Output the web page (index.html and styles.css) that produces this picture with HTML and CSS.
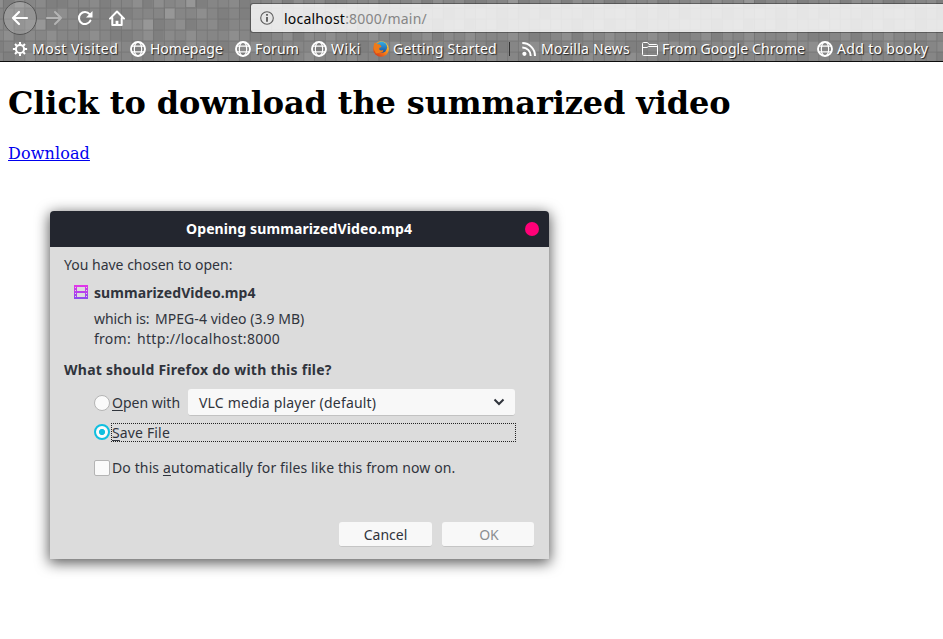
FILE: index.html
```html
<!DOCTYPE html>
<html lang="en">
<head>
<meta charset="utf-8">
<title>localhost:8000/main/</title>
<link rel="stylesheet" href="styles.css">
</head>
<body>
<svg class="defs" width="0" height="0">
  <defs>
    <linearGradient id="film" x1="0" y1="0" x2="0" y2="1"><stop offset="0" stop-color="#e535e8"/><stop offset="1" stop-color="#8a4af0"/></linearGradient>
    <linearGradient id="fox" x1=".9" y1=".1" x2=".2" y2=".9"><stop offset="0" stop-color="#ffd83a"/><stop offset=".45" stop-color="#f98a18"/><stop offset="1" stop-color="#d8401a"/></linearGradient>
    <linearGradient id="sky" x1="0" y1="0" x2="0" y2="1"><stop offset="0" stop-color="#35b0e6"/><stop offset="1" stop-color="#1a4f9c"/></linearGradient>
    <symbol id="globe" viewBox="0 0 16 16"><g fill="none" stroke="#fff"><circle cx="8" cy="8" r="7" stroke-width="1.9"/><ellipse cx="8" cy="8" rx="3.7" ry="7" stroke-width="1.2"/><path d="M1.8 5.2h12.4M1.8 10.8h12.4" stroke-width="1.2"/></g></symbol>
  </defs>
</svg>
<header class="chrome">
  <svg class="tiles" width="943" height="61" aria-hidden="true">
    <defs>
      <pattern id="cells" width="139.49" height="66" x="2.9" y="-3.4" patternUnits="userSpaceOnUse">
        <g transform="scale(10.73 11)">
          <rect width="13" height="6" fill="#868686"/>
          <path fill="#7f7f7f" d="M0 0h1v1h-1zM4 0h2v1h-2zM9 0h1v2h-1zM2 1h1v1h-1zM7 1h1v2h-1zM11 1h1v1h-1zM1 2h1v2h-1zM4 2h1v1h-1zM10 3h2v1h-2zM3 4h1v1h-1zM6 4h2v1h-2zM0 5h1v1h-1zM9 5h1v1h-1zM12 4h1v1h-1z"/>
          <path fill="#8e8e8e" d="M1 0h1v1h-1zM5 1h1v1h-1zM12 0h1v1h-1zM3 2h1v1h-1zM0 3h1v1h-1zM4 3h1v2h-1zM8 3h1v1h-1zM11 2h1v1h-1zM2 5h1v1h-1zM6 5h1v1h-1zM10 4h1v1h-1z"/>
          <path fill="#8a8a8a" d="M3 0h1v1h-1zM6 2h1v1h-1zM12 2h1v1h-1zM2 3h1v1h-1zM9 4h1v1h-1zM8 0h1v1h-1zM5 5h1v1h-1z"/>
        </g>
      </pattern>
      <pattern id="grid" width="10.73" height="11" x="2.9" y="-3.4" patternUnits="userSpaceOnUse"><path d="M.5 0v11M0 .5h10.73" stroke="#686868" stroke-opacity=".5"/></pattern>
    </defs>
    <rect width="943" height="61" fill="url(#cells)"/>
    <path fill="#979797" d="M186 0h9v7h-9zM143 19h10v11h-10zM165 8h10v11h-10zM35 19h10v11h-10zM508 0h10v3h-10zM744 0h10v3h-10z"/>
    <rect width="943" height="61" fill="url(#grid)"/>
  </svg>
  <div class="toolbar">
    <span class="back"><svg width="18" height="18" viewBox="0 0 18 18" fill="none" stroke="#fff" stroke-width="2.2" stroke-linecap="round" stroke-linejoin="round"><path d="M16 9H2M8 3L2 9l6 6"/></svg></span>
    <svg class="forward" width="18" height="18" viewBox="0 0 18 18" fill="none" stroke="#b4b4b4" stroke-width="2" stroke-linecap="round" stroke-linejoin="round"><path d="M2 9h14M10 3l6 6-6 6"/></svg>
    <svg class="reload" width="16" height="16" viewBox="0 0 16 16"><path d="M12.6 4.2A6 6 0 1 0 13.4 10.6" fill="none" stroke="#fff" stroke-width="2.1" stroke-linecap="round"/><path d="M15.5 1v6.5H9z" fill="#fff"/></svg>
    <svg class="home" width="16" height="16" viewBox="0 0 16 16" fill="none" stroke="#fff" stroke-width="2" stroke-linejoin="round" stroke-linecap="round"><path d="M1 8.6L8 1.5l7 7.1M3.3 8v7h9.4V8"/><path d="M8 15v-4.2" stroke-width="2.8" stroke-linecap="butt"/></svg>
    <div class="urlbar">
      <svg width="14" height="14" viewBox="0 0 14 14"><circle cx="7" cy="7" r="6.3" fill="none" stroke="#5c5c5c" stroke-width="1.1"/><path d="M7 3v1.8M7 6v4.7" stroke="#505050" stroke-width="1.7"/></svg>
      <span class="url"><b>localhost</b>:8000/main/</span>
    </div>
  </div>
  <nav class="bookmarks">
    <a class="mark visited"><svg width="16" height="16" viewBox="0 0 16 16" stroke="#fff" fill="none"><circle cx="8" cy="8" r="4.1" stroke-width="2"/><path d="M8 .9v2.5M8 12.6v2.5M.9 8h2.5M12.6 8h2.5M3 3l1.7 1.7M11.3 11.3L13 13M3 13l1.7-1.7M11.3 4.7L13 3" stroke-width="2"/></svg><span>Most Visited</span></a>
    <a class="mark homepage"><svg width="16" height="16"><use href="#globe"/></svg><span>Homepage</span></a>
    <a class="mark forum"><svg width="16" height="16"><use href="#globe"/></svg><span>Forum</span></a>
    <a class="mark wiki"><svg width="16" height="16"><use href="#globe"/></svg><span>Wiki</span></a>
    <a class="mark started"><svg width="16" height="16" viewBox="0 0 16 16"><circle cx="8" cy="8" r="7.800" fill="url(#fox)"/><circle cx="8.500" cy="6.200" r="5.600" fill="url(#sky)"/><path d="M1 3l.8-1.600 1.700 1.900q1.500-.5 3 .2l2 1.700q-.2 1.300-2 1.500-.8 1.200.2 2.300 1.500.8 3.600-.1.400 1.500-1.800 2.600L3 12.500.600 8z" fill="#f07a18"/></svg><span>Getting Started</span></a>
    <i class="divider"></i>
    <a class="mark news"><svg width="16" height="16" viewBox="0 0 16 16"><circle cx="3.400" cy="12.800" r="2.100" fill="#fff"/><path d="M1.300 6.400a8.400 8.400 0 0 1 8.400 8.500M1.300 2.100a12.700 12.700 0 0 1 12.700 12.800" fill="none" stroke="#fff" stroke-width="2"/></svg><span>Mozilla News</span></a>
    <a class="mark chromef"><svg width="16" height="16" viewBox="0 0 16 16" fill="none" stroke="#fff" stroke-linejoin="round"><path d="M.5 13.500V2.500q0-1 1-1h4l1.500 2h7.500q1 0 1 1v9q0 1-1 1h-13q-1 0-1-1zM.5 6.500h4.500l1.500-1h9"/></svg><span>From Google Chrome</span></a>
    <a class="mark booky"><svg width="16" height="16"><use href="#globe"/></svg><span>Add to booky</span></a>
  </nav>
</header>
<main class="page">
  <h1>Click to download the summarized video</h1>
  <a class="download" href="#">Download</a>
</main>
<section class="dialog" role="dialog">
  <div class="titlebar"><span class="title">Opening summarizedVideo.mp4</span><i class="close"></i></div>
  <div class="content">
    <p class="chosen">You have chosen to open:</p>
    <div class="file"><svg width="14" height="14" viewBox="0 0 14 14" shape-rendering="crispEdges"><path fill="url(#film)" fill-rule="evenodd" d="M0 0h14v14H0zM1 2v1h1V2zM1 5v1h1V5zM1 8v1h1V8zM1 11v1h1v-1zM12 2v1h1V2zM12 5v1h1V5zM12 8v1h1V8zM12 11v1h1v-1zM3 2v4h8V2zM3 8v4h8V8z"/></svg><span>summarizedVideo.mp4</span></div>
    <div class="meta"><span class="key">which is:</span><span class="type">MPEG-4 video (3.9 MB)</span></div>
    <div class="meta"><span class="from">from:</span><span class="host">http://localhost:8000</span></div>
    <p class="question">What should Firefox do with this file?</p>
    <div class="open"><i class="radio"></i><span class="openlabel"><u>O</u>pen with</span>
      <div class="select"><span>VLC media player (default)</span><svg width="12" height="8" viewBox="0 0 12 8"><path d="M1.500 1.500L6 6l4.500-4.500" fill="none" stroke="#30343c" stroke-width="2"/></svg></div></div>
    <div class="save"><i class="radio on"></i><span class="focus"><u>S</u>ave File</span></div>
    <div class="auto"><i class="check"></i><span>Do this <u>a</u>utomatically for files like this from now on.</span></div>
    <div class="buttons"><button>Cancel</button><button disabled>OK</button></div>
  </div>
</section>
</body>
</html>
```
FILE: styles.css
```css
* { box-sizing: border-box; }
html, body { height: 100%; overflow: hidden; }
body { margin: 0; background: #fff; font: 14px/20px "Noto Sans", "Open Sans", sans-serif; }
svg { flex: none; display: block; }
.defs { position: absolute; }

.chrome { position: relative; height: 62px; border-bottom: 1px solid #0c0c0c; background: #848484; overflow: hidden; }
.tiles { position: absolute; inset: 0; }
.toolbar { position: relative; height: 36px; display: flex; align-items: center; padding-left: 3px; }
.back { width: 34px; height: 34px; border-radius: 50%; border: 1px solid #555; background: rgba(255,255,255,.17); display: grid; place-items: center; }
.forward { margin-left: 8px; }
.reload { margin-left: 14px; }
.home { margin-left: 16px; }
.urlbar { flex: 1; height: 30px; margin: 0 -4px 0 125px; padding-left: 9px; display: flex; align-items: center; gap: 10px; border: 1px solid rgba(50,50,50,.5); border-radius: 3px 0 0 3px; background: rgba(255,255,255,.8); background-clip: padding-box; }
.url { padding-top: 2px; color: #858585; letter-spacing: .22px; }
.url b { color: #050505; font-weight: 400; }

.bookmarks { position: relative; display: flex; align-items: center; height: 25px; padding-left: 12px; gap: 12px; color: #fff; white-space: nowrap; text-shadow: 1px 1px 1px #222; }
.mark { display: flex; align-items: center; gap: 4px; }
.visited span { width: 86px; letter-spacing: .48px; }
.homepage span { width: 73px; }
.forum span { width: 44px; letter-spacing: .16px; }
.wiki span { width: 30px; letter-spacing: .55px; }
.started span { width: 104px; letter-spacing: .22px; }
.news span { width: 89px; letter-spacing: .26px; }
.chromef span { width: 143px; letter-spacing: .1px; }
.booky span { width: 92px; letter-spacing: .34px; }
.divider { width: 1px; height: 14px; margin-right: -1px; background: #333; }

.page { display: flow-root; padding: 0 8px; font: 16px "DejaVu Serif", serif; }
.page h1 { margin: 22px 0; font-size: 32px; line-height: 38px; letter-spacing: -.13px; }
.download { color: #0000ee; letter-spacing: .12px; }

.dialog { position: absolute; left: 50px; top: 211px; width: 499px; height: 348px; border-radius: 4px 4px 0 0; background: #dcdcdc; color: #30343c; box-shadow: 0 3px 14px 1px rgba(0,0,0,.65); white-space: nowrap; }
.titlebar { height: 36px; display: flex; align-items: center; padding: 0 10px 0 136px; justify-content: space-between; border-radius: 4px 4px 0 0; background: #23262f; color: #fff; font-weight: 700; }
.title { letter-spacing: .11px; }
.close { width: 14px; height: 14px; border-radius: 50%; background: #ff0077; }
.content { padding: 8px 14px 0; }
p { margin: 0; }
.file { display: flex; align-items: center; gap: 6px; margin: 8px 0 6px 10px; font-weight: 700; letter-spacing: .08px; }
.file svg { margin-bottom: 2px; }
.meta { display: flex; gap: 6px; margin-left: 30px; }
.key { width: 55px; letter-spacing: -.1px; }
.type { letter-spacing: .05px; }
.from { width: 37px; letter-spacing: .25px; }
.host { letter-spacing: .32px; }
.question { margin-top: 11px; font-weight: 700; letter-spacing: .25px; }
u { text-decoration: underline; text-underline-offset: 2px; text-decoration-skip-ink: none; }
.open { display: flex; align-items: center; margin: 9px 0 0 30px; height: 27px; }
.openlabel { width: 76px; margin-left: 2px; }
.radio, .check { flex: none; width: 16px; height: 16px; border: 1px solid #b4b4b4; background: #fafafa; }
.radio { border-radius: 50%; }
.check { border-radius: 2px; }
.radio.on { border: 2px solid #0fbfdf; background: radial-gradient(circle, #0fbfdf 2.7px, #fafafa 3.5px); }
.select { width: 327px; height: 27px; padding: 0 10px 0 11px; display: flex; align-items: center; justify-content: space-between; border-radius: 3px; background: #f8f8f8; border-bottom: 1px solid #c2c2c2; letter-spacing: .2px; }
.select span { padding-top: 2px; }
.save { display: flex; align-items: center; margin: 7px 0 0 30px; height: 19px; }
.save .radio { margin-bottom: 1px; }
.focus { width: 405px; height: 19px; margin-left: 1px; line-height: 18px; border: 1px dotted #222; letter-spacing: .15px; }
.auto { display: flex; align-items: center; gap: 2px; margin: 16px 0 0 30px; letter-spacing: .12px; }
.buttons { display: flex; justify-content: flex-end; gap: 10px; margin: 44px 1px 0 0; }
button { width: 93px; height: 25px; padding: 2px 0 0; border: 0; border-bottom: 1px solid #c5c5c5; border-radius: 3px; background: #f8f8f8; color: #30343c; font: inherit; }
button:disabled { width: 92px; padding-left: 2px; color: #8b8e92; }
```
